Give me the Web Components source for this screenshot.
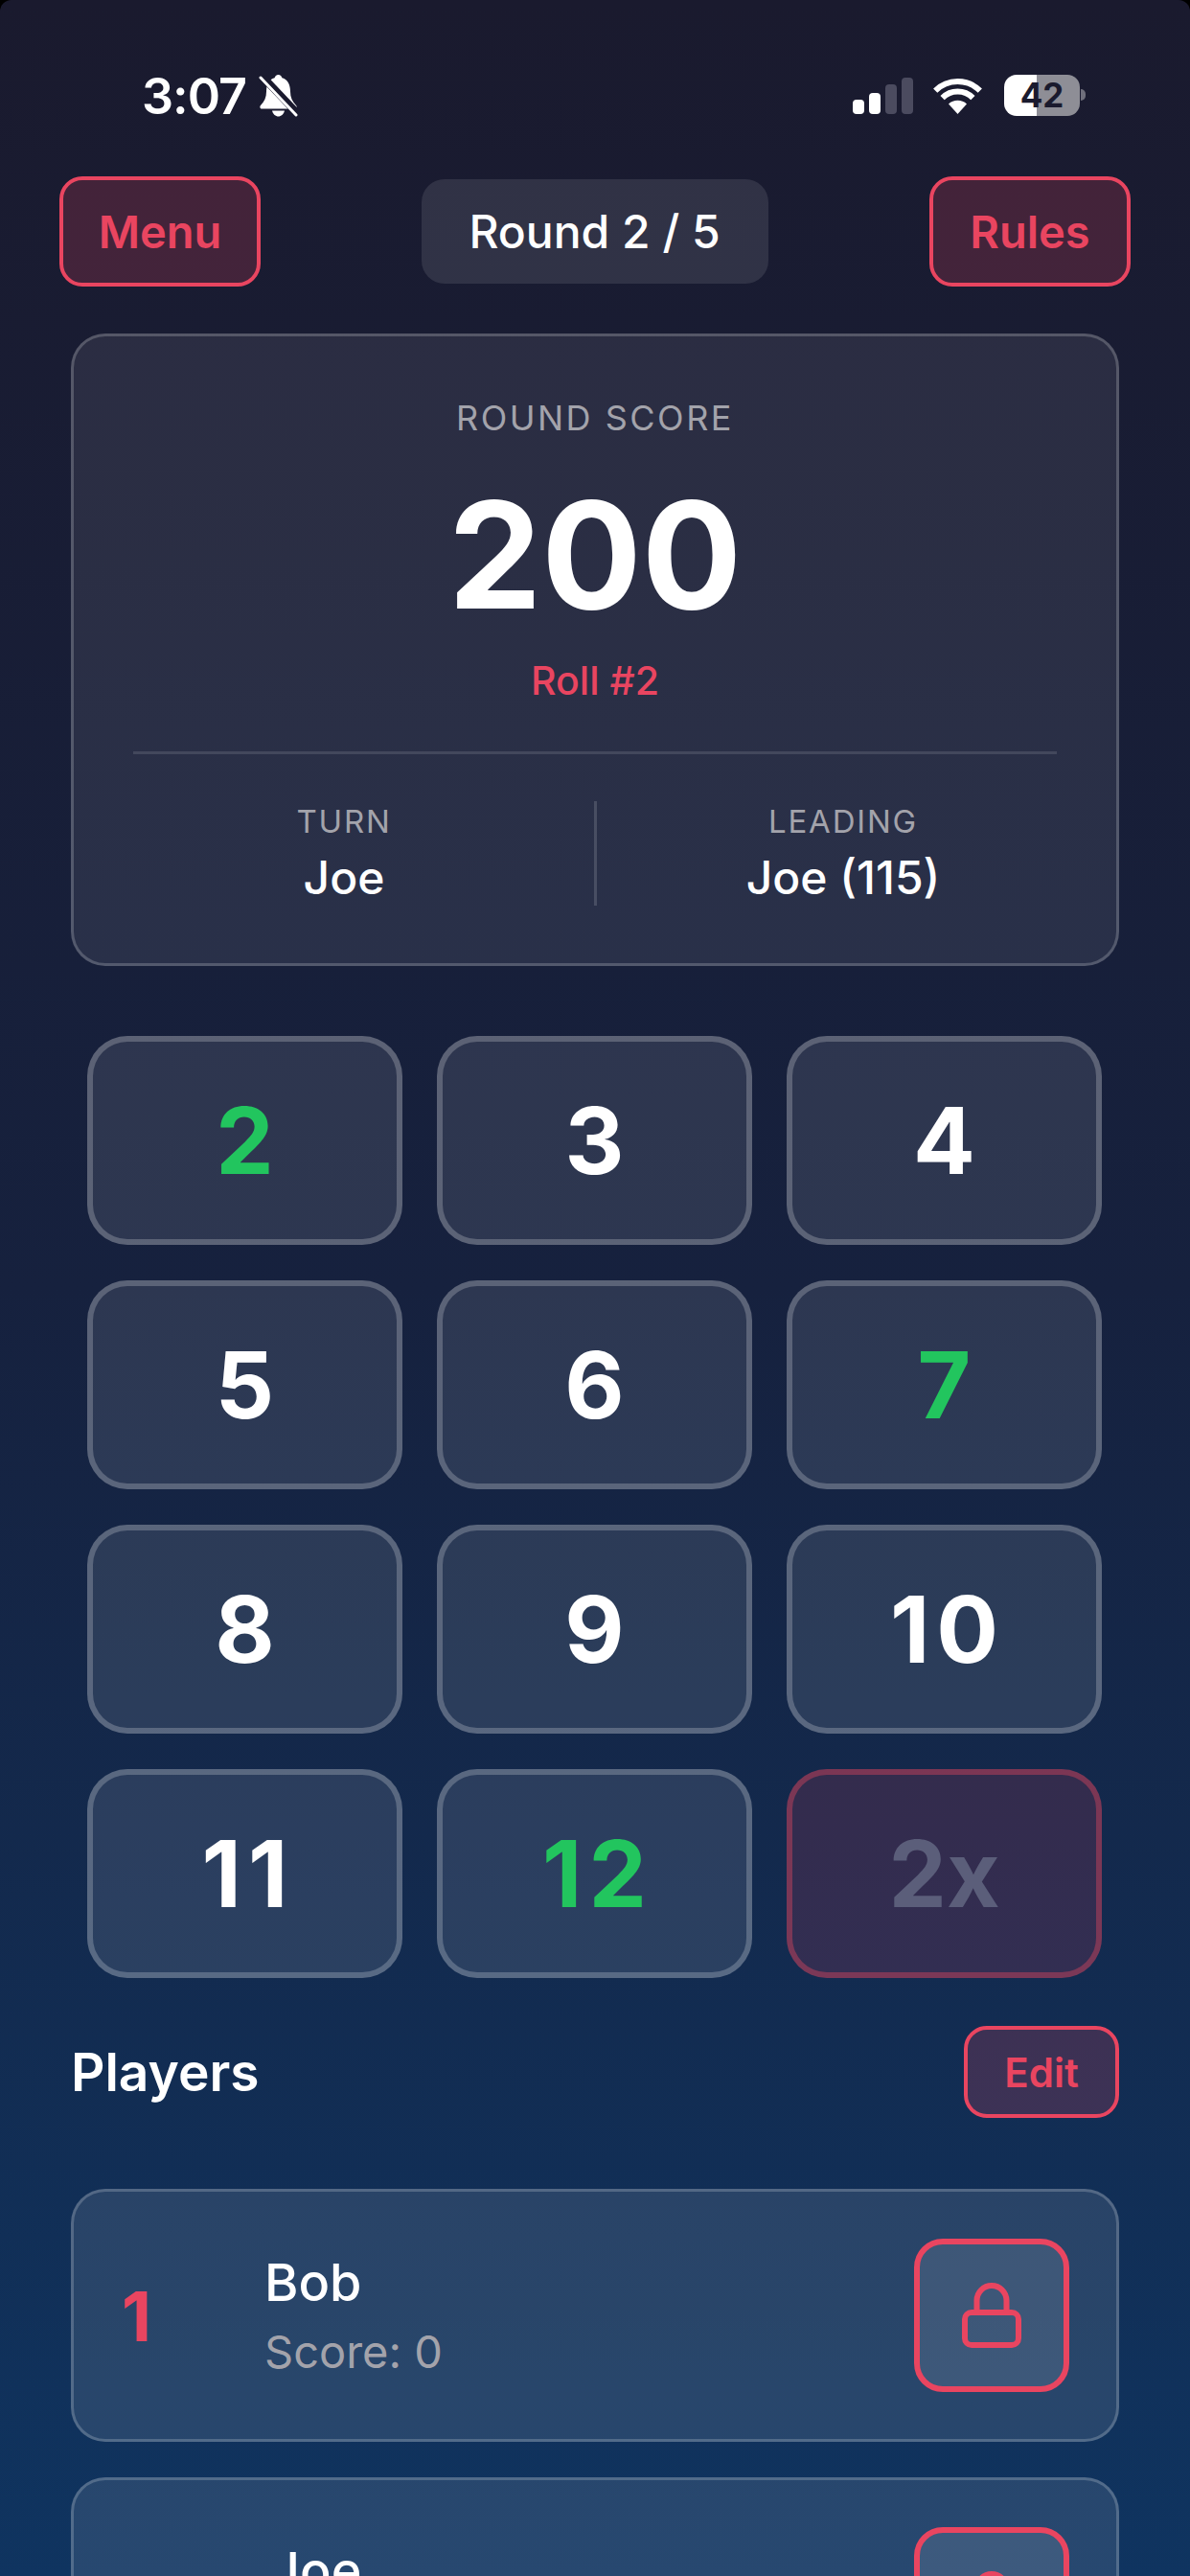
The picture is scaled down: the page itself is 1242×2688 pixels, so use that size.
<!DOCTYPE html>
<html>
<head>
<meta charset="utf-8">
<title>Round 2 / 5</title>
<style>
    html, body {
        margin: 0;
        height: 2688px;
        overflow: hidden;
        background: #000;
    }

    body {
        font-family: Inter, "Liberation Sans", sans-serif;
        color: #fff;
    }
</style>
</head>
<body>
<game-screen>
    <status-bar></status-bar>
    <top-bar round="Round 2 / 5"></top-bar>
    <score-card score="200" roll="Roll #2" turn="Joe" leading="Joe (115)"></score-card>
    <number-pad>
        <pad-key class="hit">2</pad-key>
        <pad-key>3</pad-key>
        <pad-key>4</pad-key>
        <pad-key>5</pad-key>
        <pad-key>6</pad-key>
        <pad-key class="hit">7</pad-key>
        <pad-key>8</pad-key>
        <pad-key>9</pad-key>
        <pad-key class="two">10</pad-key>
        <pad-key class="two">11</pad-key>
        <pad-key class="hit two">12</pad-key>
        <pad-key class="off">2x</pad-key>
    </number-pad>
    <players-head></players-head>
    <player-row rank="1" name="Bob" score="Score: 0"></player-row>
    <player-row name="Joe" style="--name-left: 155px"></player-row>
</game-screen>

<script>
    const RED = "#e94560";

    customElements.define("game-screen", class extends HTMLElement {
        constructor() {
            super();
            this.attachShadow({ mode: "open" }).innerHTML = /*html*/ `
            <style>
                :host {
                    display: block;
                    width: 1242px;
                    height: 2688px;
                    overflow: hidden;
                    border-radius: 12px 12px 0 0;
                    background: linear-gradient(180deg, #1a1a2e 0%, #16213e 50%, #0f3460 100%);
                }
            </style>
            <slot></slot>`;
        }
    });

    customElements.define("status-bar", class extends HTMLElement {
        constructor() {
            super();
            this.attachShadow({ mode: "open" }).innerHTML = /*html*/ `
            <style>
                :host {
                    display: flex;
                    justify-content: space-between;
                    box-sizing: border-box;
                    height: 184px;
                    padding: 78px 109px 0 148px;
                }

                .group {
                    display: flex;
                    align-items: flex-start;
                    height: 44px;
                }

                .time {
                    font-size: 52px;
                    font-weight: 600;
                    line-height: 46px;
                    letter-spacing: -1px;
                    margin-right: 13px;
                }

                .signal {
                    display: flex;
                    align-items: flex-end;
                    gap: 5px;
                    height: 38px;
                    margin: 3px 20px 0 0;
                }

                .signal i {
                    width: 12px;
                    border-radius: 4px;
                    background: #fff;
                }

                .signal i.dim {
                    background: #4b4b5f;
                }

                .wifi {
                    margin: 4px 22px 0 0;
                }

                .battery {
                    width: 79px;
                    height: 43px;
                    border-radius: 13px;
                    background: linear-gradient(90deg, #fff 0 34px, #8e8e96 34px);
                    color: #1a1a2e;
                    font-size: 35px;
                    font-weight: 700;
                    line-height: 43px;
                    text-align: center;
                }

                .nub {
                    width: 5px;
                    height: 12px;
                    margin: 15px 0 0 1px;
                    border-radius: 0 6px 6px 0;
                    background: #6f6f7c;
                }
            </style>
            <div class="group">
                <span class="time">3:07</span>
                <svg width="41" height="44" viewBox="0 0 41 44">
                    <path fill="#fff" d="M20.500 0c-2 0-3.400 1.400-3.900 3.300C10.400 5 8 11 8 17.500c0 6-2 10.400-6 14.400-1.200 1.200-.6 3.600 1.200 3.600h34.600c1.800 0 2.400-2.400 1.200-3.600-4-4-6-8.400-6-14.400C33 11 30.600 5 24.400 3.300 23.900 1.400 22.500 0 20.500 0z"/>
                    <path fill="#fff" d="M14 37.500h13c-.8 3.700-3.800 6-6.500 6s-5.700-2.300-6.500-6z"/>
                    <path stroke="#1a1a2e" stroke-width="8" d="M4 2l38 40"/>
                    <path stroke="#fff" stroke-width="3" stroke-linecap="round" d="M2 3l37 39"/>
                </svg>
            </div>
            <div class="group">
                <div class="signal">
                    <i style="height:15px"></i>
                    <i style="height:22px"></i>
                    <i class="dim" style="height:31px"></i>
                    <i class="dim" style="height:38px"></i>
                </div>
                <svg class="wifi" width="53" height="37" viewBox="0 0 53 37">
                    <path fill="#fff" d="M26.500 37L17 26.500a14 14 0 0 1 19 0z"/>
                    <path fill="none" stroke="#fff" stroke-width="6" d="M10.600 20.100a22.500 22.500 0 0 1 31.800 0"/>
                    <path fill="none" stroke="#fff" stroke-width="6" d="M3.200 12.700a33 33 0 0 1 46.600 0"/>
                </svg>
                <div class="battery">42</div>
                <div class="nub"></div>
            </div>`;
        }
    });

    customElements.define("red-button", class extends HTMLElement {
        constructor() {
            super();
            this.attachShadow({ mode: "open" }).innerHTML = /*html*/ `
            <style>
                :host {
                    display: flex;
                    align-items: center;
                    justify-content: center;
                    box-sizing: border-box;
                    border: 4px solid ${RED};
                    border-radius: 24px;
                    background: rgba(233, 69, 96, 0.2);
                    color: ${RED};
                    font-weight: 600;
                }
            </style>
            <slot></slot>`;
        }
    });

    customElements.define("top-bar", class extends HTMLElement {
        constructor() {
            super();
            this.attachShadow({ mode: "open" }).innerHTML = /*html*/ `
            <style>
                :host {
                    display: flex;
                    justify-content: space-between;
                    align-items: center;
                    height: 115px;
                    padding: 0 62px;
                }

                red-button {
                    width: 210px;
                    height: 115px;
                    font-size: 47px;
                }

                .round {
                    display: flex;
                    align-items: center;
                    justify-content: center;
                    width: 362px;
                    height: 109px;
                    margin-left: -1px;
                    border-radius: 24px;
                    background: rgba(255, 255, 255, 0.1);
                    font-size: 48px;
                    font-weight: 550;
                }
            </style>
            <red-button>Menu</red-button>
            <div class="round"></div>
            <red-button>Rules</red-button>`;
            this.shadowRoot.querySelector(".round").textContent = this.getAttribute("round");
        }
    });

    customElements.define("score-card", class extends HTMLElement {
        constructor() {
            super();
            this.attachShadow({ mode: "open" }).innerHTML = /*html*/ `
            <style>
                :host {
                    display: block;
                    box-sizing: border-box;
                    width: 1094px;
                    height: 660px;
                    margin: 49px 0 0 74px;
                    padding: 63px 62px 0;
                    border: 3px solid rgba(255, 255, 255, 0.2);
                    border-radius: 36px;
                    background: rgba(255, 255, 255, 0.08);
                    text-align: center;
                }

                .label {
                    color: #a3a3ab;
                    font-size: 36px;
                    line-height: 44px;
                    letter-spacing: 2.5px;
                }

                .split .label {
                    margin-top: 1px;
                    font-size: 33px;
                    line-height: 40px;
                    letter-spacing: 1.8px;
                }

                .score {
                    margin-top: 31px;
                    font-size: 155px;
                    font-weight: 700;
                    line-height: 180px;
                }

                .roll {
                    margin-top: 16px;
                    color: ${RED};
                    font-size: 41px;
                    font-weight: 500;
                    line-height: 50px;
                }

                .split {
                    display: flex;
                    margin-top: 49px;
                    padding-top: 49px;
                    border-top: 3px solid rgba(255, 255, 255, 0.12);
                }

                .left {
                    width: 442px;
                }

                .right {
                    width: 448px;
                    padding-left: 3px;
                }

                .rule {
                    width: 3px;
                    height: 109px;
                    margin: 0 31px 0 41px;
                    background: rgba(255, 255, 255, 0.15);
                }

                .value {
                    margin-top: 11px;
                    font-size: 48px;
                    font-weight: 550;
                    line-height: 56px;
                }
            </style>
            <div class="label">ROUND SCORE</div>
            <div class="score"></div>
            <div class="roll"></div>
            <div class="split">
                <div class="left">
                    <div class="label">TURN</div>
                    <div class="value turn"></div>
                </div>
                <div class="rule"></div>
                <div class="right">
                    <div class="label">LEADING</div>
                    <div class="value leading"></div>
                </div>
            </div>`;
            const root = this.shadowRoot;
            root.querySelector(".score").textContent = this.getAttribute("score");
            root.querySelector(".roll").textContent = this.getAttribute("roll");
            root.querySelector(".turn").textContent = this.getAttribute("turn");
            root.querySelector(".leading").textContent = this.getAttribute("leading");
        }
    });

    customElements.define("number-pad", class extends HTMLElement {
        constructor() {
            super();
            this.attachShadow({ mode: "open" }).innerHTML = /*html*/ `
            <style>
                :host {
                    display: grid;
                    grid-template-columns: repeat(3, 329px);
                    grid-auto-rows: 218px;
                    gap: 37px 36px;
                    margin-top: 73px;
                    padding-left: 91px;
                }
            </style>
            <slot></slot>`;
        }
    });

    customElements.define("pad-key", class extends HTMLElement {
        constructor() {
            super();
            this.attachShadow({ mode: "open" }).innerHTML = /*html*/ `
            <style>
                :host {
                    display: flex;
                    align-items: center;
                    justify-content: center;
                    box-sizing: border-box;
                    border: 6px solid rgba(255, 255, 255, 0.22);
                    border-radius: 42px;
                    background: rgba(255, 255, 255, 0.1);
                    font-size: 96px;
                    font-weight: 700;
                }

                /* the "1" is wider in the reference font */
                :host(.two) {
                    padding-left: 7px;
                    letter-spacing: 7px;
                }

                :host(.hit) {
                    color: #22c55e;
                }

                :host(.off) {
                    border-color: rgba(233, 69, 96, 0.4);
                    background: rgba(233, 69, 96, 0.15);
                    color: #5b5e7a;
                }
            </style>
            <slot></slot>`;
        }
    });

    customElements.define("players-head", class extends HTMLElement {
        constructor() {
            super();
            this.attachShadow({ mode: "open" }).innerHTML = /*html*/ `
            <style>
                :host {
                    display: flex;
                    justify-content: space-between;
                    align-items: center;
                    width: 1094px;
                    height: 96px;
                    margin: 50px 0 74px 74px;
                }

                .title {
                    font-size: 55px;
                    font-weight: 600;
                }

                red-button {
                    width: 162px;
                    height: 96px;
                    font-size: 42px;
                }
            </style>
            <div class="title">Players</div>
            <red-button>Edit</red-button>`;
        }
    });

    customElements.define("player-row", class extends HTMLElement {
        constructor() {
            super();
            this.attachShadow({ mode: "open" }).innerHTML = /*html*/ `
            <style>
                :host {
                    display: flex;
                    align-items: center;
                    box-sizing: border-box;
                    width: 1094px;
                    height: 264px;
                    margin: 0 0 37px 74px;
                    padding: 0 49px 0 50px;
                    border: 3px solid rgba(255, 255, 255, 0.2);
                    border-radius: 36px;
                    background: rgba(255, 255, 255, 0.1);
                }

                .rank {
                    width: var(--name-left, 149px);
                    color: ${RED};
                    font-size: 72px;
                    font-weight: 700;
                }

                .info {
                    flex: 1;
                }

                .name {
                    font-size: 54px;
                    font-weight: 550;
                    line-height: 64px;
                }

                .score {
                    min-height: 58px;
                    margin-top: 11px;
                    color: #a3a3ab;
                    font-size: 47px;
                    line-height: 58px;
                }

                .lock {
                    display: flex;
                    align-items: center;
                    justify-content: center;
                    box-sizing: border-box;
                    width: 162px;
                    height: 160px;
                    border: 6px solid ${RED};
                    border-radius: 30px;
                    background: rgba(255, 255, 255, 0.1);
                }
            </style>
            <div class="rank"></div>
            <div class="info">
                <div class="name"></div>
                <div class="score"></div>
            </div>
            <div class="lock">
                <svg width="62" height="68" viewBox="0 0 62 68" fill="none" stroke="${RED}" stroke-width="6" stroke-linejoin="round">
                    <rect x="3" y="31" width="56" height="34" rx="7"/>
                    <path d="M15.500 31V18.500a15.500 15.500 0 0 1 31 0V31"/>
                </svg>
            </div>`;
            const root = this.shadowRoot;
            root.querySelector(".rank").textContent = this.getAttribute("rank");
            root.querySelector(".name").textContent = this.getAttribute("name");
            root.querySelector(".score").textContent = this.getAttribute("score");
        }
    });
</script>
</body>
</html>
